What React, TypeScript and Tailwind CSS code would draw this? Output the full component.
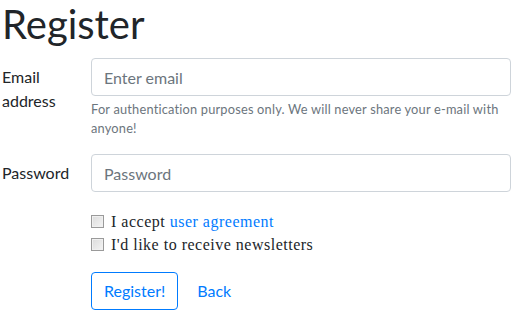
export default function App() {
  const sans = "font-['Lato','Liberation_Sans',sans-serif]"
  return (
    <div className={`${sans} text-[16px] leading-6 text-[#212529] bg-white min-h-screen px-[2px] pr-[8px]`}>
      <h1 className="text-[40px] leading-[48px] font-normal mb-[10px]">Register</h1>

      <form className="grid grid-cols-[89px_1fr]">
        {/* Email */}
        <label className="pt-[7px] pb-[7px]">Email address</label>
        <div className="mb-4">
          <input
            type="email"
            placeholder="Enter email"
            className="block w-full h-[38px] px-3 border border-[#ced4da] rounded placeholder-[#6c757d] outline-none"
          />
          <p className="mt-1 text-[12.8px] leading-[19px] tracking-[0.2px] text-[#6c757d]">
            For authentication purposes only. We will never share your e-mail with anyone!
          </p>
        </div>

        {/* Password */}
        <label className="pt-[7px]">Password</label>
        <div className="mb-4">
          <input
            type="password"
            placeholder="Password"
            className="block w-full h-[38px] px-3 border border-[#ced4da] rounded placeholder-[#6c757d] outline-none"
          />
        </div>

        {/* Options */}
        <div />
        <div className="mb-4 pt-[2px] font-['Liberation_Serif',serif] tracking-[0.5px]">
          {[
            <>I accept <a href="#" className="text-[#007bff]">user agreement</a></>,
            <>I&apos;d like to receive newsletters</>,
          ].map((txt, i) => (
            <label key={i} className="flex items-center gap-[7px] h-[23px]">
              <span className="w-[13px] h-[13px] border border-[#9a9a9a] bg-gradient-to-br from-[#dcdcdc] to-[#f4f4f4] shadow-[inset_0_0_0_1px_#f0f0f0]" />
              <span>{txt}</span>
            </label>
          ))}
        </div>

        <div />
        <div className="flex items-center">
          <button
            type="button"
            className="h-[38px] px-3 border border-[#007bff] rounded text-[#007bff]"
          >
            Register!
          </button>
          <a href="#" className="ml-[19px] text-[#007bff]">Back</a>
        </div>
      </form>
    </div>
  )
}
